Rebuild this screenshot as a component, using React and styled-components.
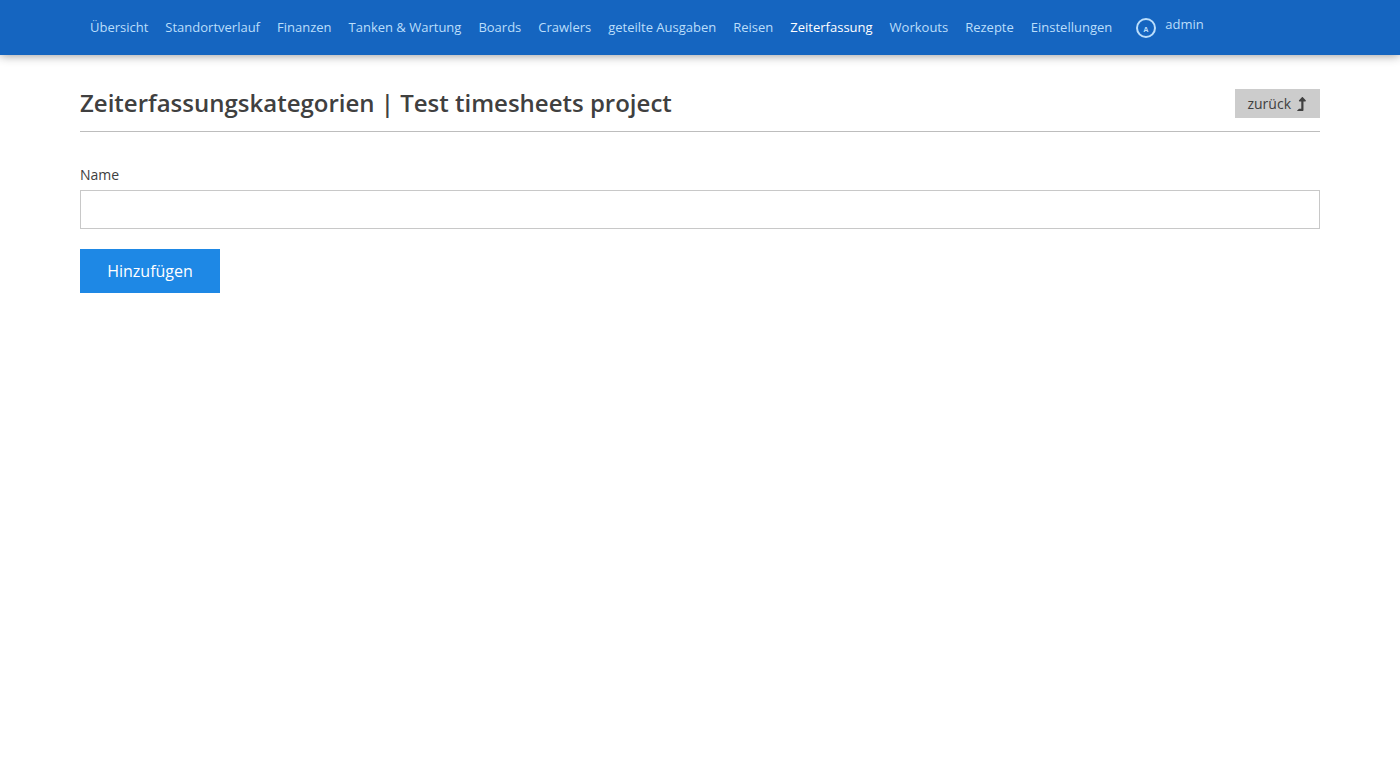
import React from "react";
import styled, { createGlobalStyle } from "styled-components";
import { FaLevelUpAlt } from "react-icons/fa";

const GlobalStyle = createGlobalStyle`
  *, *::before, *::after { box-sizing: border-box; }
  body {
    margin: 0;
    background: #fff;
    color: #404040;
    font-family: "Open Sans", sans-serif;
    font-size: 14px;
    line-height: 20px;
  }
`;

const Header = styled.header`
  background: #1565c0;
  box-shadow: 0 0 10px rgba(0, 0, 0, 0.45);
`;

const Nav = styled.nav`
  display: flex;
  align-items: center;
  gap: 17px;
  height: 55px;
  padding: 0 90px 2px;
`;

const NavLink = styled.a`
  color: ${(p) => (p.$active ? "#fff" : "#bbdefb")};
  font-size: 13px;
  line-height: 20px;
  text-decoration: none;
  white-space: nowrap;
`;

const UserLink = styled(NavLink)`
  display: flex;
  gap: 9px;
  padding: 2px 7px 0;
`;

const UserName = styled.span`
  line-height: 12px;
`;

const Avatar = styled.svg`
  width: 20px;
  height: 20px;
`;

const Main = styled.main`
  padding: 34px 80px;
`;

const TitleBar = styled.div`
  display: flex;
  align-items: flex-start;
  justify-content: space-between;
  padding-bottom: 13px;
  border-bottom: 1px solid #bdbdbd;
`;

const Title = styled.h1`
  margin: 0;
  font-size: 24px;
  font-weight: 600;
  line-height: 27px;
`;

const BackLink = styled.a`
  display: flex;
  align-items: center;
  gap: 6px;
  height: 29px;
  padding: 0 14px 0 12px;
  background: #ccc;
  color: inherit;
  text-decoration: none;
`;

const BackIcon = styled(FaLevelUpAlt)`
  width: 9px;
  height: 14px;
`;

const Form = styled.form`
  display: flex;
  flex-direction: column;
  align-items: flex-start;
  padding-top: 33px;
`;

const Label = styled.label`
  margin-bottom: 5px;
`;

const TextInput = styled.input`
  width: 100%;
  height: 39px;
  margin-bottom: 20px;
  padding: 0 10px;
  border: 1px solid #c8c8c8;
  border-radius: 0;
  background: #fff;
  font: inherit;
`;

const SubmitButton = styled.button`
  width: 140px;
  height: 44px;
  padding: 0;
  border: 0;
  background: #1e88e5;
  color: #fff;
  font-family: inherit;
  font-size: 16px;
  cursor: pointer;
`;

const items = [
  "Übersicht", "Standortverlauf", "Finanzen", "Tanken & Wartung", "Boards",
  "Crawlers", "geteilte Ausgaben", "Reisen", "Zeiterfassung", "Workouts",
  "Rezepte", "Einstellungen",
];

export default function App() {
  return (
    <>
      <GlobalStyle />
      <Header>
        <Nav>
          {items.map((item) => (
            <NavLink key={item} href="#" $active={item === "Zeiterfassung"}>{item}</NavLink>
          ))}
          <UserLink href="#">
            <Avatar viewBox="0 0 20 20" aria-hidden="true">
              <circle cx="10" cy="10" r="9" fill="none" stroke="#bbdefb" strokeWidth="2" />
              <text x="10" y="14" textAnchor="middle" fill="#bbdefb" fontSize="7" fontWeight="700">A</text>
            </Avatar>
            <UserName>admin</UserName>
          </UserLink>
        </Nav>
      </Header>
      <Main>
        <TitleBar>
          <Title>Zeiterfassungskategorien | Test timesheets project</Title>
          <BackLink href="#">zurück <BackIcon aria-hidden="true" /></BackLink>
        </TitleBar>
        <Form onSubmit={(e) => e.preventDefault()}>
          <Label htmlFor="name">Name</Label>
          <TextInput id="name" type="text" />
          <SubmitButton type="submit">Hinzufügen</SubmitButton>
        </Form>
      </Main>
    </>
  );
}
